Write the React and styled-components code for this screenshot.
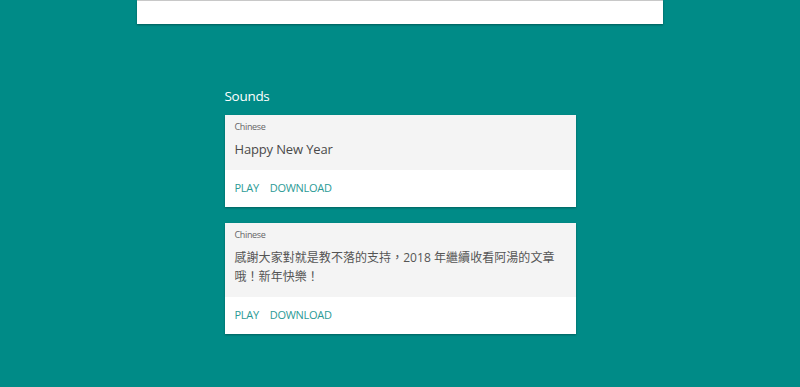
import React from "react";
import styled, { createGlobalStyle } from "styled-components";

const Global = createGlobalStyle`
  html, body { margin: 0; padding: 0; }
  body {
    background: #008b87;
    font-family: "Open Sans", "Noto Sans CJK TC", sans-serif;
    height: 387px;
    overflow: hidden;
  }
`;

const Page = styled.div`
  display: flex;
  flex-direction: column;
  align-items: center;
`;

const TopBar = styled.div`
  width: 526px;
  height: 23px;
  background: #fff;
  border-top: 1px solid #c8c8c8;
  box-shadow: 0 1px 2px rgba(0, 0, 0, 0.35);
`;

const Section = styled.section`
  width: 351px;
  margin-top: 62px;
  display: flex;
  flex-direction: column;
  gap: 16px;
`;

const Heading = styled.h2`
  margin: 0 0 -7px;
  font-size: 13.5px;
  letter-spacing: -0.3px;
  font-weight: 400;
  color: #fff;
  line-height: 20px;
`;

const Card = styled.div`
  background: #fff;
  box-shadow: 0 1px 2px rgba(0, 0, 0, 0.3);
  display: flex;
  flex-direction: column;
`;

const Body = styled.div`
  background: #f4f4f4;
  padding: 6px 10px 11px;
`;

const Lang = styled.div`
  font-size: 9px;
  letter-spacing: -0.35px;
  color: #666;
  line-height: 12px;
`;

const Text = styled.div`
  margin-top: 7px;
  font-size: ${(p) => (p.$cjk ? "12px" : "13px")};
  letter-spacing: ${(p) => (p.$cjk ? "0.05px" : "-0.15px")};
  line-height: 19px;
  color: ${(p) => (p.$cjk ? "#555" : "#4a4a4a")};
`;

const Actions = styled.div`
  display: flex;
  gap: 11px;
  padding: 10px 10px 11px;
`;

const Action = styled.a`
  font-size: 11px;
  letter-spacing: -0.3px;
  line-height: 16px;
  color: #2b9a96;
  text-transform: uppercase;
  cursor: pointer;
`;

const sounds = [
  { lang: "Chinese", cjk: false, text: "Happy New Year" },
  {
    lang: "Chinese",
    cjk: true,
    text: "感謝大家對就是教不落的支持，2018 年繼續收看阿湯的文章哦！新年快樂！",
  },
];

export default function App() {
  return (
    <>
      <Global />
      <Page>
        <TopBar />
        <Section>
          <Heading>Sounds</Heading>
          {sounds.map((s, i) => (
            <Card key={i}>
              <Body>
                <Lang>{s.lang}</Lang>
                <Text $cjk={s.cjk}>{s.text}</Text>
              </Body>
              <Actions>
                <Action>Play</Action>
                <Action>Download</Action>
              </Actions>
            </Card>
          ))}
        </Section>
      </Page>
    </>
  );
}
